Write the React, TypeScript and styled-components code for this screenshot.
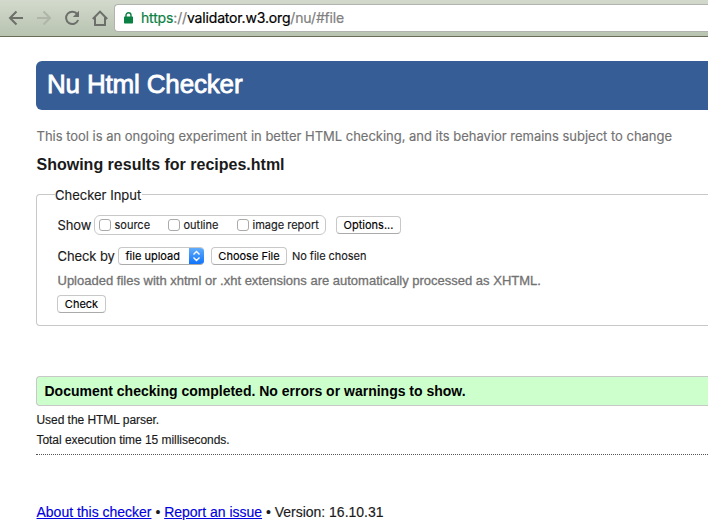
import React from "react";
import styled, { createGlobalStyle } from "styled-components";

const GlobalStyle = createGlobalStyle`
  * { box-sizing: border-box; }
  body { margin: 0; background: #fff; overflow: hidden; }
`;

const helvetica = '"Liberation Sans", Arial, sans-serif';
const system = 'Inter, Roboto, sans-serif';

const Screen = styled.div`
  width: 708px;
  height: 532px;
  overflow: hidden;
  background: #fff;
  color: #1a1a1a;
  font-family: ${helvetica};
  white-space: nowrap;
`;

const Toolbar = styled.header`
  display: flex;
  height: 37px;
  padding: 4px 0 4px 8px;
  background: linear-gradient(#d3dacd, #b8c3b0);
  border-bottom: 1px solid #686c58;
`;

const NavIcons = styled.nav`
  display: flex;
  gap: 12px;
  width: 106px;
  padding-top: 6px;
  svg { display: block; flex: none; }
`;

const AddressBar = styled.div`
  display: flex;
  align-items: center;
  flex: 1;
  height: 28px;
  padding-left: 9px;
  background: #fff;
  border: 1px solid #b1b4ae;
  border-right: 0;
  border-radius: 4px 0 0 4px;
`;

const Url = styled.span`
  margin-left: 8px;
  font: 14px/26px ${system};
  letter-spacing: -0.16px;
  -webkit-text-stroke: 0.2px;
  color: #000;
`;

const UrlPart = styled.span<{ $tone: string }>`
  color: ${(p) => p.$tone};
`;

const Page = styled.main`
  padding: 24px 0 0 36px;
`;

const Banner = styled.h1`
  height: 49px;
  margin: 0;
  padding-left: 11px;
  border-radius: 6px 0 0 6px;
  background: #365d95;
  color: #fff;
  font: 26px/46px ${helvetica};
  letter-spacing: -0.17px;
  -webkit-text-stroke: 0.8px #fff;
`;

const Text = styled.div<{ $size: number; $height: number; $family?: string; $color?: string; $spacing?: number; $bold?: boolean }>`
  height: ${(p) => p.$height}px;
  font-family: ${(p) => p.$family ?? helvetica};
  font-size: ${(p) => p.$size}px;
  font-weight: ${(p) => (p.$bold ? 700 : 400)};
  line-height: ${(p) => p.$height}px;
  letter-spacing: ${(p) => p.$spacing ?? 0}px;
  color: ${(p) => p.$color ?? "#1a1a1a"};
  -webkit-text-stroke: ${(p) => (p.$bold ? 0 : 0.15)}px;
`;

const Hint = styled(Text)`
  margin-bottom: 1px;
  padding: 1px 0 0 0.5px;
  -webkit-text-stroke: 0.3px;
`;

const Intro = styled.section`
  padding: 16px 0 1px 0.5px;
`;

const Form = styled.fieldset`
  height: 141px;
  margin: 0;
  padding: 12px 0 0 20px;
  border: 1px solid #c8c8c8;
  border-right: 0;
  border-radius: 4px 0 0 4px;
`;

const Legend = styled.legend`
  margin-left: -2px;
  padding: 2px 1px 0 0;
`;

const Row = styled.div<{ $height: number; $top?: number }>`
  display: flex;
  align-items: center;
  height: ${(p) => p.$height}px;
  margin-top: ${(p) => p.$top ?? 0}px;
`;

const FieldName = styled.div<{ $width: number }>`
  width: ${(p) => p.$width}px;
  padding-left: 0.5px;
`;

const OptionGroup = styled.div`
  display: flex;
  align-items: center;
  width: 232px;
  height: 20px;
  padding-left: 4px;
  border: 1px solid #c8c8c8;
  border-radius: 6px;
`;

const Choice = styled.label<{ $width: number }>`
  display: flex;
  align-items: center;
  gap: 3.5px;
  width: ${(p) => p.$width}px;
`;

const Box = styled.span`
  flex: none;
  width: 12px;
  height: 12px;
  border: 1px solid #aaa;
  border-radius: 3px;
  background: #fff;
`;

const Button = styled.button<{ $width: number; $left?: number }>`
  display: block;
  width: ${(p) => p.$width}px;
  height: 18px;
  margin: 0 0 0 ${(p) => p.$left ?? 0}px;
  padding: 0;
  border: 1px solid #c8c8c8;
  border-bottom-color: #aaa;
  border-radius: 4px;
  background: #fff;
  color: #000;
  font: 11px/16px ${system};
  -webkit-text-stroke: 0.15px;
`;

const Select = styled.div`
  display: flex;
  justify-content: space-between;
  width: 86px;
  height: 18px;
  padding-left: 6.5px;
  overflow: hidden;
  border: 1px solid #c8c8c8;
  border-right: 0;
  border-bottom-color: #aaa;
  border-radius: 4px;
`;

const Stepper = styled.span`
  display: flex;
  align-items: center;
  justify-content: center;
  width: 15px;
  height: 18px;
  margin-top: -1px;
  background: linear-gradient(#66b0fb, #0b70fb);
`;

const FileName = styled.div`
  margin-left: 5px;
`;

const Result = styled.div`
  height: 30px;
  margin-top: 50px;
  padding-left: 7.5px;
  border: 1px solid #c8c8c8;
  border-right: 0;
  border-radius: 4px 0 0 4px;
  background: #cfc;
`;

const Details = styled.section`
  height: 49px;
  padding: 4px 0 0 0.5px;
  border-bottom: 1px dotted #555;
`;

const Footer = styled.footer`
  padding: 47px 0 0 0.5px;
`;

const Link = styled.a`
  color: #0000e0;
  text-decoration: underline;
  text-underline-offset: 1px;
`;

export default function App() {
  return (
    <Screen>
      <GlobalStyle />
      <Toolbar>
        <NavIcons>
          <svg width="16" height="16" viewBox="0 0 16 16" fill="none" stroke="#6d6f6a" strokeWidth="2">
            <path d="M15 8H2.5M8.5 1.5L2 8l6.5 6.5" />
          </svg>
          <svg width="16" height="16" viewBox="0 0 16 16" fill="none" stroke="#afb6a9" strokeWidth="2">
            <path d="M1 8h12.5M7.5 1.5L14 8l-6.5 6.5" />
          </svg>
          <svg width="16" height="16" viewBox="0 0 16 16">
            <path d="M13.3 4.2A6.2 6.2 0 1 0 14.1 10" fill="none" stroke="#6d6f6a" strokeWidth="2" />
            <path d="M15 .8V7H8.8Z" fill="#6d6f6a" />
          </svg>
          <svg width="16" height="16" viewBox="0 0 16 16" fill="none" stroke="#6d6f6a" strokeWidth="2">
            <path d="M.8 9L8 1.6 15.2 9M3 7.6V15h10V7.6" />
          </svg>
        </NavIcons>
        <AddressBar>
          <svg width="9" height="12" viewBox="0 0 9 12">
            <path d="M2 5V3.2a2.5 2.5 0 0 1 5 0V5" fill="none" stroke="#0b8043" strokeWidth="1.4" />
            <rect y="4.5" width="9" height="7" rx=".7" fill="#0b8043" />
          </svg>
          <Url>
            <UrlPart $tone="#0b8043">https</UrlPart>
            <UrlPart $tone="#808080">://</UrlPart>
            validator.w3.org
            <UrlPart $tone="#808080">/nu/#file</UrlPart>
          </Url>
        </AddressBar>
      </Toolbar>
      <Page>
        <Banner>Nu Html Checker</Banner>
        <Intro>
          <Text $size={13} $height={20} $family={system} $color="#727272" $spacing={-0.015}>
            This tool is an ongoing experiment in better HTML checking, and its behavior remains subject to change
          </Text>
          <Text $size={16} $height={38} $bold>Showing results for recipes.html</Text>
        </Intro>
        <Form>
          <Legend>
            <Text $size={13} $height={16} $family={system}>Checker Input</Text>
          </Legend>
          <Row $height={20}>
            <FieldName $width={37}>
              <Text $size={13} $height={18} $family={system} $spacing={-0.1}>Show</Text>
            </FieldName>
            <OptionGroup>
              <Choice $width={69}><Box /><Text $size={11} $height={16} $family={system}>source</Text></Choice>
              <Choice $width={69}><Box /><Text $size={11} $height={16} $family={system}>outline</Text></Choice>
              <Choice $width={85}><Box /><Text $size={11} $height={16} $family={system}>image report</Text></Choice>
            </OptionGroup>
            <Button $width={65} $left={10}>Options...</Button>
          </Row>
          <Row $height={20} $top={11}>
            <FieldName $width={61}>
              <Text $size={13} $height={18} $family={system} $spacing={-0.1}>Check by</Text>
            </FieldName>
            <Select>
              <Text $size={11} $height={16} $family={system} $color="#000">file upload</Text>
              <Stepper>
                <svg width="9" height="12" viewBox="0 0 9 12" fill="none" stroke="#fff" strokeWidth="1.4">
                  <path d="M1.5 4.5l3-3 3 3M1.5 7.5l3 3 3-3" />
                </svg>
              </Stepper>
            </Select>
            <Button $width={76} $left={7}>Choose File</Button>
            <FileName>
              <Text $size={11} $height={16} $family={system} $spacing={-0.04}>No file chosen</Text>
            </FileName>
          </Row>
          <Hint $size={13} $height={28} $color="#727272">
            Uploaded files with xhtml or .xht extensions are automatically processed as XHTML.
          </Hint>
          <Button $width={49}>Check</Button>
        </Form>
        <Result>
          <Text $size={14} $height={28} $bold $color="#000">
            Document checking completed. No errors or warnings to show.
          </Text>
        </Result>
        <Details>
          <Text $size={12} $height={20} $spacing={-0.045}>Used the HTML parser.</Text>
          <Text $size={12} $height={20} $spacing={-0.045}>Total execution time 15 milliseconds.</Text>
        </Details>
        <Footer>
          <Text $size={14} $height={20} $spacing={-0.01}>
            <Link>About this checker</Link> • <Link>Report an issue</Link> • Version: 16.10.31
          </Text>
        </Footer>
      </Page>
    </Screen>
  );
}
